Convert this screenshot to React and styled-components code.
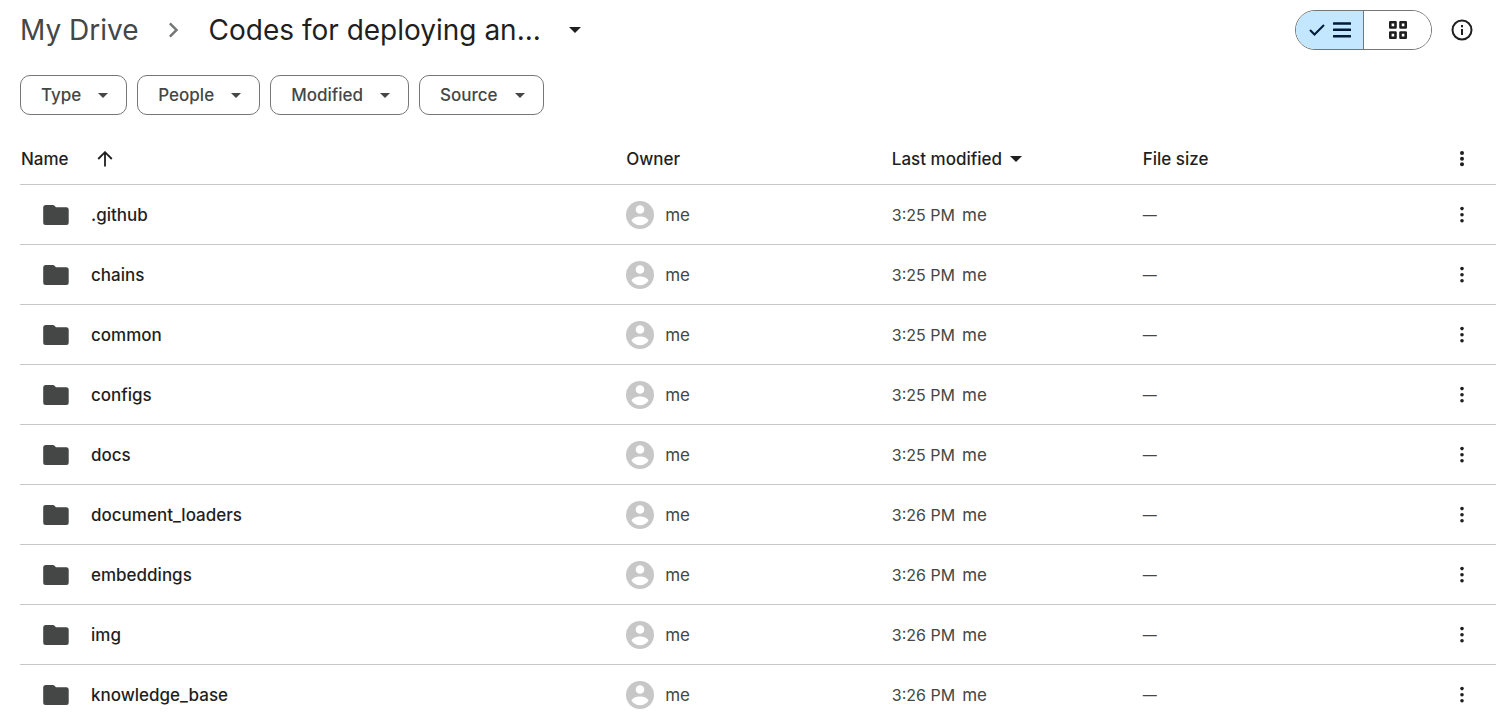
import React from "react";
import styled, { createGlobalStyle } from "styled-components";

const GlobalStyle = createGlobalStyle`
  * { box-sizing: border-box; }
  body {
    margin: 0;
    background: #fff;
    color: #1f1f1f;
    font-family: Inter, Roboto, "Liberation Sans", sans-serif;
    font-size: 17px;
    line-height: 24px;
  }
  button { font: inherit; color: inherit; background: none; border: 0; padding: 0; cursor: pointer; }
  svg { display: block; flex: none; }
`;

const Page = styled.main`
  display: flex;
  flex-direction: column;
  height: 100vh;
  padding: 10px 14px 0 20px;
`;

const TopBar = styled.header`
  display: flex;
  align-items: center;
  justify-content: space-between;
  height: 40px;
  padding-right: 14px;
`;

const Breadcrumbs = styled.nav`
  display: flex;
  align-items: center;
  font-size: 28px;
  line-height: 40px;
  white-space: nowrap;
`;

const Crumb = styled.a`
  color: #444746;
  text-decoration: none;
`;

const CrumbSeparator = styled.span`
  display: flex;
  margin: 0 20px;
`;

const CurrentFolder = styled.button`
  display: flex;
  align-items: center;
  gap: 28px;
`;

const Actions = styled.div`
  display: flex;
  align-items: center;
  gap: 10px;
`;

const ViewToggle = styled.div`
  display: flex;
  height: 40px;
  width: 137px;
  border: 1px solid #747775;
  border-radius: 20px;
  overflow: hidden;
`;

const ViewButton = styled.button`
  display: flex;
  flex: 1;
  align-items: center;
  justify-content: center;
  gap: 8px;
  background: ${(p) => (p.$selected ? "#c2e7ff" : "#fff")};
  color: ${(p) => (p.$selected ? "#001d35" : "#1f1f1f")};

  & + & { border-left: 1px solid #747775; }
`;

const IconButton = styled.button`
  display: inline-flex;
  align-items: center;
  justify-content: center;
  width: 40px;
  height: 40px;
  vertical-align: middle;
`;

const Filters = styled.div`
  display: flex;
  gap: 10px;
  margin-top: 25px;
`;

const Chip = styled.button`
  display: flex;
  align-items: center;
  justify-content: space-between;
  gap: 17px;
  height: 40px;
  padding: 0 18px 0 20px;
  border: 1px solid #747775;
  border-radius: 10px;
  color: #444746;
  font-weight: 500;
`;

const FileList = styled.section`
  flex: 1;
  min-height: 0;
  margin-top: 19px;
  overflow-y: auto;
  scrollbar-width: none;
`;

const FileTable = styled.table`
  width: 100%;
  table-layout: fixed;
  border-collapse: separate;
  border-spacing: 0;
  white-space: nowrap;
`;

const HeadCell = styled.th`
  width: ${(p) => p.$width};
  height: 51px;
  padding: 0 0 0 1px;
  border-bottom: 1px solid #c7c7c7;
  text-align: left;
  font-weight: 500;
`;

const SortButton = styled.button`
  display: flex;
  align-items: center;
  gap: ${(p) => p.$gap};
  font-weight: 500;
`;

const Cell = styled.td`
  height: 60px;
  padding: 0 0 0 1px;
  border-bottom: 1px solid #c7c7c7;
  color: #444746;
`;

const FileName = styled.div`
  display: flex;
  align-items: center;
  gap: 22px;
  padding-left: 22px;
  color: #1f1f1f;
  font-weight: 500;
`;

const Owner = styled.div`
  display: flex;
  align-items: center;
  gap: 11px;
`;

const Modified = styled.div`
  display: flex;
  align-items: baseline;
  gap: 7px;
`;

const Time = styled.span`
  font-size: 16px;
`;

const FileSize = styled.span`
  font-size: 14px;
`;

const Caret = ({ width = 10, height = 5 }) => (
  <svg width={width} height={height} viewBox="0 0 10 5" preserveAspectRatio="none" fill="currentColor" aria-hidden="true">
    <path d="M0 0h10L5 5z" />
  </svg>
);

const ChevronIcon = () => (
  <svg width="30" height="30" viewBox="0 0 24 24" fill="#747775" aria-hidden="true">
    <path d="M9.4 18 8 16.6l4.6-4.6L8 7.4 9.4 6l6 6z" />
  </svg>
);

const CheckIcon = () => (
  <svg width="16" height="12" viewBox="0 0 16 12" fill="none" stroke="currentColor" strokeWidth="2" aria-hidden="true">
    <path d="m1 6 4.500 4.500L15 1" />
  </svg>
);

const ListIcon = () => (
  <svg width="18" height="16" viewBox="0 0 18 16" fill="currentColor" aria-hidden="true">
    <rect width="18" height="2.400" rx=".5" y=".3" />
    <rect width="18" height="2.400" rx=".5" y="6.600" />
    <rect width="18" height="2.400" rx=".5" y="13" />
  </svg>
);

const GridIcon = () => (
  <svg width="18" height="18" viewBox="0 0 18 18" fill="none" stroke="currentColor" strokeWidth="2.600" strokeLinejoin="round" aria-hidden="true">
    <path d="M1.300 1.300h5.200v5.200H1.300zM11.500 1.300h5.200v5.200h-5.200zM1.300 11.500h5.200v5.200H1.300zM11.500 11.500h5.200v5.200h-5.200z" />
  </svg>
);

const InfoIcon = () => (
  <svg width="22" height="22" viewBox="0 0 22 22" fill="none" stroke="currentColor" strokeWidth="2" aria-hidden="true">
    <circle cx="11" cy="11" r="9.500" />
    <path d="M11 10v6M11 6v2.200" />
  </svg>
);

const ArrowUpIcon = () => (
  <svg width="16" height="16" viewBox="0 0 16 16" fill="none" stroke="currentColor" strokeWidth="1.800" aria-hidden="true">
    <path d="M8 15.500V1.500M1.200 8 8 1.200 14.800 8" />
  </svg>
);

const FolderIcon = () => (
  <svg width="26" height="20" viewBox="0 0 26 20" fill="#444746" aria-hidden="true">
    <path d="M2.500 0H10q.8 0 1.300.5L13 2.300h10.200a2.500 2.500 0 0 1 2.500 2.500v12.700a2.500 2.500 0 0 1-2.500 2.500H2.700a2.500 2.500 0 0 1-2.500-2.500v-15A2.400 2.400 0 0 1 2.500 0z" />
  </svg>
);

const AvatarIcon = () => (
  <svg width="28" height="28" viewBox="0 0 28 28" aria-hidden="true">
    <circle cx="14" cy="14" r="14" fill="#c7c7c7" />
    <circle cx="14" cy="8.500" r="4.300" fill="#fff" />
    <path d="M5.600 19.800c0-2.900 5.600-4.300 8.400-4.300s8.400 1.400 8.400 4.300A10 10 0 0 1 14 24.200a10 10 0 0 1-8.400-4.400z" fill="#fff" />
  </svg>
);

const DotsIcon = ({ spacing, radius }) => (
  <svg width="24" height="24" viewBox="0 0 24 24" fill="#1f1f1f" aria-hidden="true">
    <circle cx="12" cy={11.7 - spacing} r={radius} />
    <circle cx="12" cy="11.700" r={radius} />
    <circle cx="12" cy={11.7 + spacing} r={radius} />
  </svg>
);

const filters = ["Type", "People", "Modified", "Source"];

const files = [
  { name: ".github", time: "3:25 PM" },
  { name: "chains", time: "3:25 PM" },
  { name: "common", time: "3:25 PM" },
  { name: "configs", time: "3:25 PM" },
  { name: "docs", time: "3:25 PM" },
  { name: "document_loaders", time: "3:26 PM" },
  { name: "embeddings", time: "3:26 PM" },
  { name: "img", time: "3:26 PM" },
  { name: "knowledge_base", time: "3:26 PM" },
];

export default function App() {
  return (
    <>
      <GlobalStyle />
      <Page>
        <TopBar>
          <Breadcrumbs aria-label="Breadcrumb">
            <Crumb href="#my-drive">My Drive</Crumb>
            <CrumbSeparator><ChevronIcon /></CrumbSeparator>
            <CurrentFolder>
              Codes for deploying an...
              <Caret width={12} height={6} />
            </CurrentFolder>
          </Breadcrumbs>
          <Actions>
            <ViewToggle role="group" aria-label="View">
              <ViewButton $selected aria-pressed="true" aria-label="List view">
                <CheckIcon />
                <ListIcon />
              </ViewButton>
              <ViewButton aria-pressed="false" aria-label="Grid view">
                <GridIcon />
              </ViewButton>
            </ViewToggle>
            <IconButton aria-label="View details"><InfoIcon /></IconButton>
          </Actions>
        </TopBar>

        <Filters>
          {filters.map((label) => (
            <Chip key={label}>{label}<Caret /></Chip>
          ))}
        </Filters>

        <FileList>
          <FileTable>
            <thead>
              <tr>
                <HeadCell $width="41%">
                  <SortButton $gap="28px">Name<ArrowUpIcon /></SortButton>
                </HeadCell>
                <HeadCell $width="18%">Owner</HeadCell>
                <HeadCell $width="17%">
                  <SortButton $gap="8px">Last modified<Caret width={12} height={6} /></SortButton>
                </HeadCell>
                <HeadCell>File size</HeadCell>
                <HeadCell $width="55px">
                  <IconButton aria-label="List options"><DotsIcon spacing={5.6} radius={2} /></IconButton>
                </HeadCell>
              </tr>
            </thead>
            <tbody>
              {files.map((file) => (
                <tr key={file.name}>
                  <Cell><FileName><FolderIcon />{file.name}</FileName></Cell>
                  <Cell><Owner><AvatarIcon />me</Owner></Cell>
                  <Cell><Modified><Time>{file.time}</Time><span>me</span></Modified></Cell>
                  <Cell><FileSize>—</FileSize></Cell>
                  <Cell>
                    <IconButton aria-label={`More actions for ${file.name}`}><DotsIcon spacing={6.1} radius={1.8} /></IconButton>
                  </Cell>
                </tr>
              ))}
            </tbody>
          </FileTable>
        </FileList>
      </Page>
    </>
  );
}
